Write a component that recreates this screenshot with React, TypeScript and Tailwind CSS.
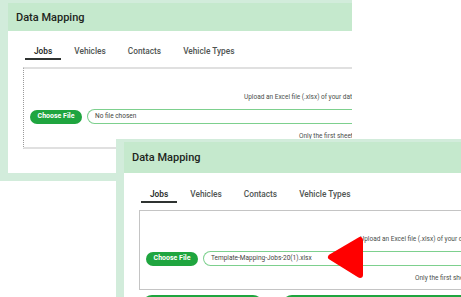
import React from 'react';

const tabs = ['Jobs', 'Vehicles', 'Contacts', 'Vehicle Types'];

interface PanelProps {
  headerClass: string;
  bodyClass: string;
  boxClass: string;
  fileName: string;
  showActions?: boolean;
}

const Panel: React.FC<PanelProps> = ({ headerClass, bodyClass, boxClass, fileName, showActions }) => {
  return (
    <div className="w-[520px] bg-[#d2ecdb] pl-[8px] pt-[3px] pb-[8px]">
      <div className={`${headerClass} bg-[#c5e9cd] flex items-center pl-[8px]`}>
        <h2 className="text-[11px] font-medium text-[#1d2520] leading-none">Data Mapping</h2>
      </div>
      <div className={`bg-white ${bodyClass}`}>
        {/* tabs */}
        <div className="flex gap-[4px] pl-[17px]">
          {tabs.map((t, i) => (
            <div
              key={t}
              className={`px-[9px] pb-[2px] border-b-2 text-[8.3px] leading-[10px] ${
                i === 0 ? 'border-[#2f3331] text-[#2b2f2d] font-semibold' : 'border-transparent text-[#4f5552] font-medium'
              }`}
            >
              {t}
            </div>
          ))}
        </div>

        {/* upload box */}
        <div className={`ml-[15px] mt-[7px] ${boxClass}`}>
          <p className="pt-[24px] pl-[220px] text-[6.5px] leading-[8px] text-[#4a4f4c] whitespace-nowrap">
            Upload an Excel file (.xlsx) of your data mapping configuration.
          </p>
          <div className="mt-[8px] pl-[6px] flex items-center gap-[5px]">
            <button className="h-[14px] w-[52px] shrink-0 rounded-full bg-[#1fa53f] text-white text-[7px] font-bold leading-none">
              Choose File
            </button>
            <div className="h-[15px] flex-1 rounded-l-full border border-r-0 border-[#7dd08e] flex items-center pl-[7px] text-[6.5px] text-[#3f4441] whitespace-nowrap">
              {fileName}
            </div>
          </div>
          <p className="mt-[8px] pb-[7px] pl-[275px] text-[6.5px] leading-[8px] text-[#4a4f4c] whitespace-nowrap">
            Only the first sheet of the workbook will be read.
          </p>
        </div>

        {showActions && (
          <div className="flex gap-[19px] pl-[18px] mt-[5px]">
            <div className="h-[20px] w-[121px] rounded-full bg-[#1fa53f]" />
            <div className="h-[20px] w-[260px] rounded-full bg-[#1fa53f]" />
          </div>
        )}
      </div>
    </div>
  );
};

export default function App() {
  return (
    <div className="relative w-[461px] h-[297px] overflow-hidden bg-white font-['Roboto',sans-serif]">
      <div className="w-[352px] overflow-hidden">
        <Panel
          headerClass="h-[28px]"
          bodyClass="pt-[15px] pb-[24px]"
          boxClass="border-t-2 border-b-2 border-l border-t-[#e0e0e0] border-b-[#e0e0e0] border-l-[#9a9a9a] border-dotted [border-top-style:solid] [border-bottom-style:solid]"
          fileName="No file chosen"
        />
      </div>

      {/* second screenshot lying over the first */}
      <div className="absolute left-[116px] top-[139px] w-[345px] h-[158px] overflow-hidden">
        <Panel
          headerClass="h-[31px]"
          bodyClass="pt-[16px] pb-[30px]"
          boxClass="border-t border-b border-l border-[#c4c4c4]"
          fileName="Template-Mapping-Jobs-20(1).xlsx"
          showActions
        />
      </div>

      <svg className="absolute left-0 top-0" width="461" height="297" viewBox="0 0 461 297">
        <polygon
          points="331,257 360,240 360,275"
          fill="#ff0000"
          stroke="#ff0000"
          strokeWidth="6"
          strokeLinejoin="round"
        />
      </svg>
    </div>
  );
}
